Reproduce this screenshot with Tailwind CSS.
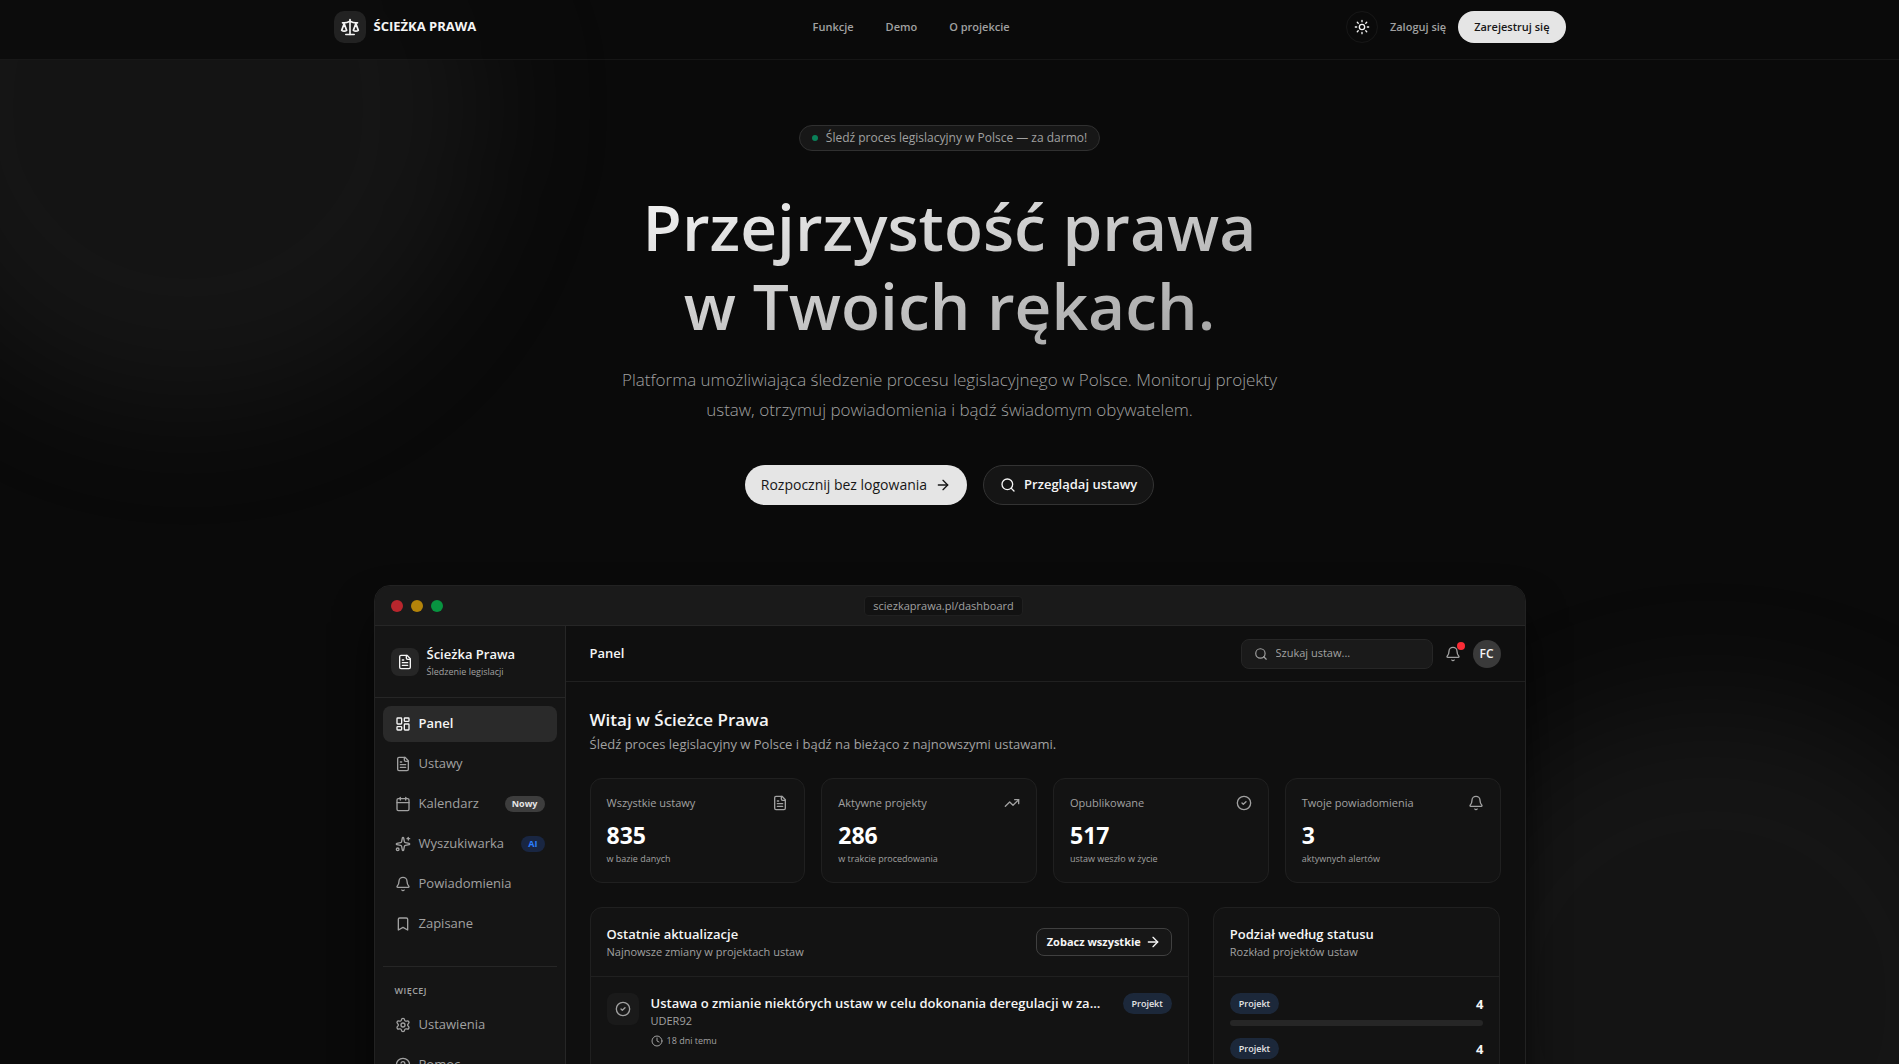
<!DOCTYPE html>
<html lang="pl">
<head>
  <meta charset="UTF-8">
  <meta name="viewport" content="width=device-width, initial-scale=1.0">
  <title>Ścieżka Prawa</title>
  <script src="https://cdn.jsdelivr.net/npm/@tailwindcss/browser@4"></script>
</head>
<body class="relative bg-[#0a0a0a] font-['Open_Sans','Noto_Sans',sans-serif] text-neutral-100">
  <!-- Icon sprite -->
  <svg class="hidden" aria-hidden="true">
    <symbol id="scale" viewBox="0 0 24 24"><path d="m16 16 3-8 3 8c-.87.65-1.92 1-3 1s-2.13-.35-3-1Z"/><path d="m2 16 3-8 3 8c-.87.65-1.92 1-3 1s-2.13-.35-3-1Z"/><path d="M7 21h10"/><path d="M12 3v18"/><path d="M3 7h2c2 0 5-1 7-2 2 1 5 2 7 2h2"/></symbol>
    <symbol id="sun" viewBox="0 0 24 24"><circle cx="12" cy="12" r="4"/><path d="M12 2v2M12 20v2M4.93 4.93l1.41 1.41M17.66 17.66l1.41 1.41M2 12h2M20 12h2M6.34 17.66l-1.41 1.41M19.07 4.93l-1.41 1.41"/></symbol>
    <symbol id="arrow" viewBox="0 0 24 24"><path d="M5 12h14"/><path d="m12 5 7 7-7 7"/></symbol>
    <symbol id="search" viewBox="0 0 24 24"><circle cx="11" cy="11" r="8"/><path d="m21 21-4.3-4.3"/></symbol>
    <symbol id="file" viewBox="0 0 24 24"><path d="M15 2H6a2 2 0 0 0-2 2v16a2 2 0 0 0 2 2h12a2 2 0 0 0 2-2V7Z"/><path d="M14 2v4a2 2 0 0 0 2 2h4"/><path d="M10 9H8"/><path d="M16 13H8"/><path d="M16 17H8"/></symbol>
    <symbol id="dashboard" viewBox="0 0 24 24"><rect width="7" height="9" x="3" y="3" rx="1"/><rect width="7" height="5" x="14" y="3" rx="1"/><rect width="7" height="9" x="14" y="12" rx="1"/><rect width="7" height="5" x="3" y="16" rx="1"/></symbol>
    <symbol id="calendar" viewBox="0 0 24 24"><path d="M8 2v4"/><path d="M16 2v4"/><rect width="18" height="18" x="3" y="4" rx="2"/><path d="M3 10h18"/></symbol>
    <symbol id="sparkles" viewBox="0 0 24 24"><path d="M11.017 2.814a1 1 0 0 1 1.966 0l1.051 5.558a2 2 0 0 0 1.594 1.594l5.558 1.051a1 1 0 0 1 0 1.966l-5.558 1.051a2 2 0 0 0-1.594 1.594l-1.051 5.558a1 1 0 0 1-1.966 0l-1.051-5.558a2 2 0 0 0-1.594-1.594l-5.558-1.051a1 1 0 0 1 0-1.966l5.558-1.051a2 2 0 0 0 1.594-1.594z"/><path d="M20 2v4"/><path d="M22 4h-4"/><circle cx="4" cy="20" r="2"/></symbol>
    <symbol id="bell" viewBox="0 0 24 24"><path d="M10.268 21a2 2 0 0 0 3.464 0"/><path d="M3.262 15.326A1 1 0 0 0 4 17h16a1 1 0 0 0 .74-1.673C19.41 13.956 18 12.499 18 8A6 6 0 0 0 6 8c0 4.499-1.411 5.956-2.738 7.326"/></symbol>
    <symbol id="bookmark" viewBox="0 0 24 24"><path d="m19 21-7-4-7 4V5a2 2 0 0 1 2-2h10a2 2 0 0 1 2 2v16z"/></symbol>
    <symbol id="settings" viewBox="0 0 24 24"><path d="M9.671 4.136a2.34 2.34 0 0 1 4.659 0 2.34 2.34 0 0 0 3.319 1.915 2.34 2.34 0 0 1 2.33 4.033 2.34 2.34 0 0 0 0 3.831 2.34 2.34 0 0 1-2.33 4.033 2.34 2.34 0 0 0-3.319 1.915 2.34 2.34 0 0 1-4.659 0 2.34 2.34 0 0 0-3.32-1.915 2.34 2.34 0 0 1-2.33-4.033 2.34 2.34 0 0 0 0-3.831A2.34 2.34 0 0 1 6.35 6.051a2.34 2.34 0 0 0 3.319-1.915"/><circle cx="12" cy="12" r="3"/></symbol>
    <symbol id="help" viewBox="0 0 24 24"><circle cx="12" cy="12" r="10"/><path d="M9.09 9a3 3 0 0 1 5.83 1c0 2-3 3-3 3"/><path d="M12 17h.01"/></symbol>
    <symbol id="trend" viewBox="0 0 24 24"><path d="M16 7h6v6"/><path d="m22 7-8.5 8.5-5-5L2 17"/></symbol>
    <symbol id="check" viewBox="0 0 24 24"><circle cx="12" cy="12" r="10"/><path d="m9 12 2 2 4-4"/></symbol>
    <symbol id="clock" viewBox="0 0 24 24"><circle cx="12" cy="12" r="10"/><path d="M12 6v6l4 2"/></symbol>
  </svg>

  <!-- Background glows -->
  <div class="absolute inset-0 -z-10 overflow-hidden">
    <div class="absolute -top-48 -left-28 size-[600px] rounded-full bg-neutral-500/10 blur-3xl"></div>
    <div class="absolute top-[700px] -right-28 size-[600px] rounded-full bg-neutral-500/10 blur-3xl"></div>
  </div>

  <!-- Header -->
  <header class="border-b border-white/5 bg-[#0a0a0a]/80">
    <div class="mx-auto flex max-w-7xl items-center justify-between px-6 pt-[11px] pb-4">
      <a href="#" class="flex items-center gap-2 text-[13px] font-bold">
        <span class="flex size-8 items-center justify-center rounded-[10px] bg-[#222222]">
          <svg class="size-5 fill-none stroke-current stroke-2 [stroke-linecap:round] [stroke-linejoin:round]"><use href="#scale"/></svg>
        </span>
        ŚCIEŻKA PRAWA
      </a>
      <nav class="flex gap-8 text-[11px] font-semibold text-neutral-400">
        <a href="#funkcje">Funkcje</a>
        <a href="#demo">Demo</a>
        <a href="#projekt">O projekcie</a>
      </nav>
      <div class="flex items-center gap-3 text-[11px] font-semibold">
        <button aria-label="Zmień motyw" class="flex size-8 items-center justify-center rounded-full border border-white/5">
          <svg class="size-4 fill-none stroke-current stroke-2 [stroke-linecap:round] [stroke-linejoin:round]"><use href="#sun"/></svg>
        </button>
        <a href="#login" class="text-neutral-400">Zaloguj się</a>
        <a href="#register" class="flex h-8 items-center rounded-full bg-neutral-200 px-4 text-neutral-900">Zarejestruj się</a>
      </div>
    </div>
  </header>

  <main>
    <!-- Hero -->
    <section class="flex flex-col items-center px-6 pt-[65px] text-center">
      <div class="flex h-[26px] items-center gap-2 rounded-full border border-[#303030] bg-neutral-900 px-3 text-xs font-medium text-neutral-400">
        <span class="size-1.5 rounded-full bg-[#0a8059]"></span>
        Śledź proces legislacyjny w Polsce — za darmo!
      </div>
      <h1 class="mt-9 bg-linear-to-br from-neutral-100 to-neutral-400 bg-clip-text text-[64px] leading-[79px] font-semibold text-transparent">Przejrzystość prawa<br>w Twoich rękach.</h1>
      <p class="mt-5 max-w-2xl text-[17px] leading-[30px] font-light text-neutral-400">Platforma umożliwiająca śledzenie procesu legislacyjnego w Polsce. Monitoruj projekty ustaw, otrzymuj powiadomienia i bądź świadomym obywatelem.</p>
      <div class="mt-10 flex gap-4">
        <a href="#demo" class="flex h-10 items-center gap-2 rounded-full bg-neutral-200 px-4 text-sm font-medium text-neutral-900">
          Rozpocznij bez logowania
          <svg class="size-4 fill-none stroke-current stroke-2 [stroke-linecap:round] [stroke-linejoin:round]"><use href="#arrow"/></svg>
        </a>
        <a href="#ustawy" class="flex h-10 items-center gap-2 rounded-full border border-[#333333] bg-[#151515] px-4 text-[13px] font-semibold">
          <svg class="size-4 fill-none stroke-current stroke-2 [stroke-linecap:round] [stroke-linejoin:round]"><use href="#search"/></svg>
          Przeglądaj ustawy
        </a>
      </div>
    </section>

    <!-- Dashboard preview -->
    <section id="demo" class="mx-auto mt-20 max-w-6xl overflow-hidden rounded-t-2xl border border-[#222222] bg-[#0f0f0f] shadow-2xl shadow-black">
      <div class="flex h-10 items-center border-b border-neutral-800 bg-[#1a1a1a] px-4">
        <div class="flex gap-2">
          <span class="size-3 rounded-full bg-[#b9262d]"></span>
          <span class="size-3 rounded-full bg-[#b3830a]"></span>
          <span class="size-3 rounded-full bg-[#089440]"></span>
        </div>
        <div class="mx-auto rounded-sm border border-[#202020] bg-[#121212] px-2 text-[11px] leading-[18px] text-neutral-400">sciezkaprawa.pl/dashboard</div>
        <div class="w-16"></div>
      </div>

      <div class="flex">
        <!-- Sidebar -->
        <aside class="w-[191px] shrink-0 border-r border-[#262626] bg-[#151515]">
          <div class="flex h-[72px] items-center gap-2 border-b border-[#262626] px-4">
            <span class="flex size-7 shrink-0 items-center justify-center rounded-lg bg-neutral-800">
              <svg class="size-4 fill-none stroke-current stroke-2 [stroke-linecap:round] [stroke-linejoin:round]"><use href="#file"/></svg>
            </span>
            <div>
              <p class="text-[13px] leading-5 font-semibold">Ścieżka Prawa</p>
              <p class="text-[9px] leading-4 text-neutral-400">Śledzenie legislacji</p>
            </div>
          </div>
          <nav class="px-2 pt-2 text-[13px] text-neutral-400">
            <ul class="flex flex-col gap-1">
              <li><a href="#" class="flex h-9 items-center gap-2 rounded-lg bg-[#2a2a2a] px-3 font-semibold text-neutral-100"><svg class="size-4 fill-none stroke-current stroke-2 [stroke-linecap:round] [stroke-linejoin:round]"><use href="#dashboard"/></svg>Panel</a></li>
              <li><a href="#" class="flex h-9 items-center gap-2 px-3"><svg class="size-4 fill-none stroke-current stroke-2 [stroke-linecap:round] [stroke-linejoin:round]"><use href="#file"/></svg>Ustawy</a></li>
              <li><a href="#" class="flex h-9 items-center gap-2 px-3"><svg class="size-4 fill-none stroke-current stroke-2 [stroke-linecap:round] [stroke-linejoin:round]"><use href="#calendar"/></svg>Kalendarz<span class="ml-auto rounded-full bg-[#3d3d3d] px-[7px] text-[9px] leading-4 font-bold text-neutral-200">Nowy</span></a></li>
              <li><a href="#" class="flex h-9 items-center gap-2 px-3"><svg class="size-4 fill-none stroke-current stroke-2 [stroke-linecap:round] [stroke-linejoin:round]"><use href="#sparkles"/></svg>Wyszukiwarka<span class="ml-auto rounded-full bg-[#192642] px-[7px] text-[9px] leading-4 font-bold text-blue-500">AI</span></a></li>
              <li><a href="#" class="flex h-9 items-center gap-2 px-3"><svg class="size-4 fill-none stroke-current stroke-2 [stroke-linecap:round] [stroke-linejoin:round]"><use href="#bell"/></svg>Powiadomienia</a></li>
              <li><a href="#" class="flex h-9 items-center gap-2 px-3"><svg class="size-4 fill-none stroke-current stroke-2 [stroke-linecap:round] [stroke-linejoin:round]"><use href="#bookmark"/></svg>Zapisane</a></li>
            </ul>
            <div class="mt-6 border-t border-[#262626] pt-4">
              <p class="mb-2 px-3 text-[9px] leading-4 font-semibold tracking-wider">WIĘCEJ</p>
              <ul class="flex flex-col gap-1">
                <li><a href="#" class="flex h-9 items-center gap-2 px-3"><svg class="size-4 fill-none stroke-current stroke-2 [stroke-linecap:round] [stroke-linejoin:round]"><use href="#settings"/></svg>Ustawienia</a></li>
                <li><a href="#" class="flex h-9 items-center gap-2 px-3"><svg class="size-4 fill-none stroke-current stroke-2 [stroke-linecap:round] [stroke-linejoin:round]"><use href="#help"/></svg>Pomoc</a></li>
              </ul>
            </div>
          </nav>
        </aside>

        <!-- Main panel -->
        <div class="min-w-0 flex-1">
          <div class="flex h-14 items-center gap-3 border-b border-[#202020] px-6">
            <p class="mr-auto text-[13px] font-semibold">Panel</p>
            <label class="flex h-[30px] w-48 items-center gap-2 rounded-lg border border-neutral-800 bg-[#1a1a1a] px-3 text-neutral-400">
              <svg class="size-3.5 shrink-0 fill-none stroke-current stroke-2 [stroke-linecap:round] [stroke-linejoin:round]"><use href="#search"/></svg>
              <input type="search" aria-label="Szukaj ustaw" placeholder="Szukaj ustaw..." class="min-w-0 flex-1 bg-transparent text-[11px] outline-none placeholder:text-neutral-400">
            </label>
            <button aria-label="Powiadomienia" class="relative text-neutral-400">
              <svg class="size-4 fill-none stroke-current stroke-2 [stroke-linecap:round] [stroke-linejoin:round]"><use href="#bell"/></svg>
              <span class="absolute -top-1 -right-1 size-2 rounded-full bg-[#fb2c36]"></span>
            </button>
            <span class="flex size-7 items-center justify-center rounded-full bg-[#3a3a3a] text-xs font-semibold">FC</span>
          </div>

          <div class="flex flex-col gap-6 p-6">
            <div>
              <h2 class="text-[17px] leading-7 font-semibold">Witaj w Ścieżce Prawa</h2>
              <p class="text-[13px] leading-5 text-neutral-400">Śledź proces legislacyjny w Polsce i bądź na bieżąco z najnowszymi ustawami.</p>
            </div>

            <!-- Stats -->
            <div class="grid grid-cols-4 gap-4">
              <div class="rounded-xl border border-[#202020] bg-[#131313] p-4">
                <div class="mb-2 flex items-center justify-between text-[11px] leading-4 text-neutral-400">Wszystkie ustawy<svg class="size-4 fill-none stroke-current stroke-2 [stroke-linecap:round] [stroke-linejoin:round]"><use href="#file"/></svg></div>
                <p class="text-[23px] leading-8 font-bold text-white">835</p>
                <p class="text-[9px] leading-[15px] text-neutral-400">w bazie danych</p>
              </div>
              <div class="rounded-xl border border-[#202020] bg-[#131313] p-4">
                <div class="mb-2 flex items-center justify-between text-[11px] leading-4 text-neutral-400">Aktywne projekty<svg class="size-4 fill-none stroke-current stroke-2 [stroke-linecap:round] [stroke-linejoin:round]"><use href="#trend"/></svg></div>
                <p class="text-[23px] leading-8 font-bold text-white">286</p>
                <p class="text-[9px] leading-[15px] text-neutral-400">w trakcie procedowania</p>
              </div>
              <div class="rounded-xl border border-[#202020] bg-[#131313] p-4">
                <div class="mb-2 flex items-center justify-between text-[11px] leading-4 text-neutral-400">Opublikowane<svg class="size-4 fill-none stroke-current stroke-2 [stroke-linecap:round] [stroke-linejoin:round]"><use href="#check"/></svg></div>
                <p class="text-[23px] leading-8 font-bold text-white">517</p>
                <p class="text-[9px] leading-[15px] text-neutral-400">ustaw weszło w życie</p>
              </div>
              <div class="rounded-xl border border-[#202020] bg-[#131313] p-4">
                <div class="mb-2 flex items-center justify-between text-[11px] leading-4 text-neutral-400">Twoje powiadomienia<svg class="size-4 fill-none stroke-current stroke-2 [stroke-linecap:round] [stroke-linejoin:round]"><use href="#bell"/></svg></div>
                <p class="text-[23px] leading-8 font-bold text-white">3</p>
                <p class="text-[9px] leading-[15px] text-neutral-400">aktywnych alertów</p>
              </div>
            </div>

            <div class="grid grid-cols-3 gap-6">
              <!-- Recent updates -->
              <div class="col-span-2 rounded-xl border border-[#202020] bg-[#131313]">
                <div class="flex items-center justify-between border-b border-[#202020] p-4">
                  <div>
                    <h3 class="text-[13px] leading-5 font-semibold">Ostatnie aktualizacje</h3>
                    <p class="text-[11px] leading-4 text-neutral-400">Najnowsze zmiany w projektach ustaw</p>
                  </div>
                  <button class="flex h-7 items-center gap-1 rounded-lg border border-neutral-700 bg-neutral-900 px-2.5 text-[11px] font-bold">
                    Zobacz wszystkie
                    <svg class="size-4 fill-none stroke-current stroke-2 [stroke-linecap:round] [stroke-linejoin:round]"><use href="#arrow"/></svg>
                  </button>
                </div>
                <div class="flex items-start gap-3 border-b border-[#202020] p-4">
                  <span class="flex size-8 shrink-0 items-center justify-center rounded-lg bg-[#1a1a1a] text-neutral-400">
                    <svg class="size-4 fill-none stroke-current stroke-2 [stroke-linecap:round] [stroke-linejoin:round]"><use href="#check"/></svg>
                  </span>
                  <div class="min-w-0 flex-1 text-neutral-400">
                    <p class="truncate text-[13px] leading-5 font-semibold text-neutral-100">Ustawa o zmianie niektórych ustaw w celu dokonania deregulacji w za...</p>
                    <p class="text-[11px] leading-4">UDER92</p>
                    <p class="mt-1 flex items-center gap-1 text-[9px] leading-[15px]"><svg class="size-3 fill-none stroke-current stroke-2 [stroke-linecap:round] [stroke-linejoin:round]"><use href="#clock"/></svg>18 dni temu</p>
                  </div>
                  <span class="rounded-full bg-[#1c283a] px-[9px] text-[9px] leading-[21px] font-semibold text-neutral-200">Projekt</span>
                </div>
              </div>

              <!-- Status breakdown -->
              <div class="rounded-xl border border-[#202020] bg-[#131313]">
                <div class="border-b border-[#202020] p-4">
                  <h3 class="text-[13px] leading-5 font-semibold">Podział według statusu</h3>
                  <p class="text-[11px] leading-4 text-neutral-400">Rozkład projektów ustaw</p>
                </div>
                <div class="flex flex-col gap-3 p-4">
                  <div>
                    <div class="mb-1.5 flex items-center justify-between text-[13px] leading-5 font-bold"><span class="rounded-full bg-[#1c283a] px-[9px] text-[9px] leading-[21px] font-semibold text-neutral-200">Projekt</span>4</div>
                    <div class="h-1.5 rounded-full bg-neutral-800"></div>
                  </div>
                  <div>
                    <div class="mb-1.5 flex items-center justify-between text-[13px] leading-5 font-bold"><span class="rounded-full bg-[#1c283a] px-[9px] text-[9px] leading-[21px] font-semibold text-neutral-200">Projekt</span>4</div>
                    <div class="h-1.5 rounded-full bg-neutral-800"></div>
                  </div>
                </div>
              </div>
            </div>
          </div>
        </div>
      </div>
    </section>
  </main>
</body>
</html>
